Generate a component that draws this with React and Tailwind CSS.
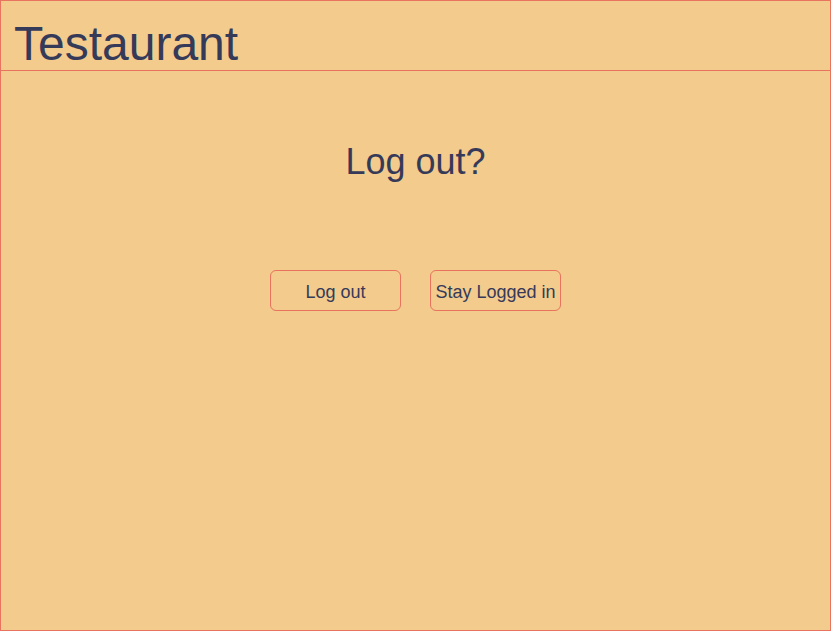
export default function App() {
  return (
    <div
      className="h-[631px] w-[831px] border border-[#e8735f] bg-[#f2cb8d] text-[#363a59] flex flex-col"
      style={{ fontFamily: '"Liberation Sans", Arial, sans-serif' }}
    >
      <header className="h-[70px] border-b border-[#e8735f] pl-[13px] flex items-end">
        <h1 className="text-[48px] leading-none pb-[2px]">Testaurant</h1>
      </header>
      <main className="flex flex-col items-center">
        <h2 className="mt-[73px] text-[36px] leading-none">Log out?</h2>
        <div className="mt-[90px] flex gap-[29px]">
          <button className="w-[131px] h-[41px] rounded-[6px] border border-[#e8735f] text-[18px] pt-[3px]">
            Log out
          </button>
          <button className="w-[131px] h-[41px] rounded-[6px] border border-[#e8735f] text-[18px] pt-[3px] whitespace-nowrap">
            Stay Logged in
          </button>
        </div>
      </main>
    </div>
  );
}
